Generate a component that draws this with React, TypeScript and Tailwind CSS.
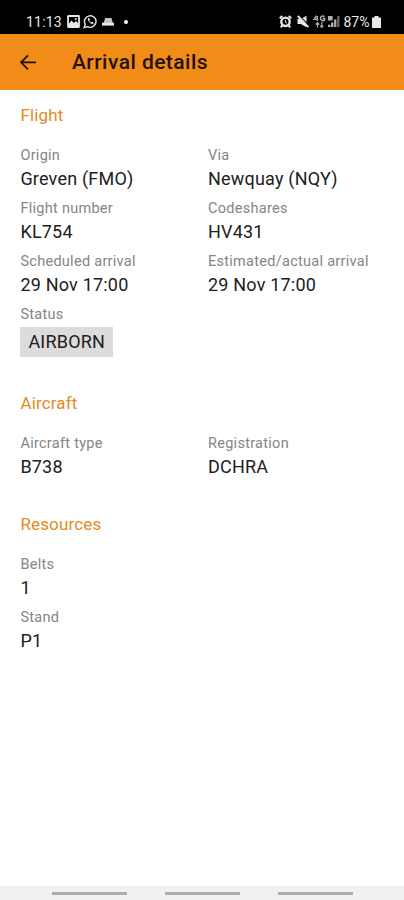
import { type ReactNode } from "react";

type FieldData = { label: string; value: string; chip?: boolean };

const sections: { title: string; fields: FieldData[]; spacing: string; single?: boolean }[] = [
  {
    title: "Flight",
    spacing: "mb-[34px]",
    fields: [
      { label: "Origin", value: "Greven (FMO)" },
      { label: "Via", value: "Newquay (NQY)" },
      { label: "Flight number", value: "KL754" },
      { label: "Codeshares", value: "HV431" },
      { label: "Scheduled arrival", value: "29 Nov 17:00" },
      { label: "Estimated/actual arrival", value: "29 Nov 17:00" },
      { label: "Status", value: "AIRBORN", chip: true },
    ],
  },
  {
    title: "Aircraft",
    spacing: "mb-[31px]",
    fields: [
      { label: "Aircraft type", value: "B738" },
      { label: "Registration", value: "DCHRA" },
    ],
  },
  {
    title: "Resources",
    spacing: "mb-0",
    single: true,
    fields: [
      { label: "Belts", value: "1" },
      { label: "Stand", value: "P1" },
    ],
  },
];

function StatusBar() {
  return (
    <div className="flex h-[34px] items-center justify-between bg-black pt-[9px] pr-[23.5px] pl-[26px] text-[#e8e8e8]">
      <div className="flex items-center">
        <span className="w-[41px] text-[14px] leading-[16px] tracking-[0.2px]">11:13</span>
        {/* gallery */}
        <svg width="13" height="13" viewBox="0 0 13 13" fill="none">
          <rect x="1" y="1" width="11" height="11" rx="0.4" stroke="currentColor" strokeWidth="1.8" />
          <path d="M1.5 9 4.5 5.5 6.8 8 9 6l2.5 2.5v3h-10z" fill="currentColor" />
          <circle cx="8.8" cy="3.9" r="1" fill="currentColor" />
        </svg>
        {/* whatsapp */}
        <svg className="ml-[3px]" width="15" height="15" viewBox="0 0 15 15" fill="none">
          <path d="M1.2 13.6 2.2 10.4A5.8 5.8 0 1 1 4.6 12.7Z" stroke="currentColor" strokeWidth="1.4" />
          <path d="M5.4 4.1c-1 .8-.7 2.2.8 3.9s3.2 2.7 4.3 1.5l.2-.8-1.6-1-.9.8c-.9-.3-1.8-1.3-2-2.1l.7-.8-.7-1.5Z" fill="currentColor" />
        </svg>
        {/* drive */}
        <svg className="ml-1" width="12" height="8" viewBox="0 0 12 8" fill="currentColor">
          <path d="M3.2 0h6.3l1.3 5H1.6z" opacity="0.85" />
          <path d="M0 4.8h12v2.8H0z" />
        </svg>
        <span className="ml-[10px] size-1 rounded-full bg-white" />
      </div>
      <div className="flex items-center">
        {/* alarm */}
        <svg width="13" height="13" viewBox="0 0 13 13" fill="none" stroke="currentColor">
          <circle cx="6.5" cy="6.8" r="4.2" strokeWidth="2.4" />
          <path d="M.7 3.3 3.3 1M12.3 3.3 9.7 1M3.3 10.5l-1.6 1.8M9.7 10.5l1.6 1.8" strokeWidth="2" />
          <path d="M6.5 4.8v2.6l1.6.7" strokeWidth="0.9" />
        </svg>
        {/* muted */}
        <svg className="ml-[5px]" width="12" height="13" viewBox="0 0 12 13">
          <path d="M.5 4h3L9.5.8v11.4L3.8 9H.5z" fill="currentColor" />
          <path d="M2.2.6 12 10.6" stroke="#000" strokeWidth="1.1" />
          <path d="M.9 1 11.4 12.2" stroke="currentColor" strokeWidth="1.9" />
        </svg>
        {/* 4G data */}
        <svg className="ml-[4px]" width="13" height="13" viewBox="0 0 13 13" fill="none" stroke="currentColor" opacity="0.75">
          <path d="M3.7.6 1 4.4h4.2M4.2 1v5M11.5 1.6C10 .3 7.4 1 7.4 3.3s2.7 3 4.3 1.8V3.5H9.5" strokeWidth="1.4" />
          <path d="M4.5 12.5V8M2.8 9.5 4.5 7.7l1.7 1.8M8.8 7v5M7.1 10.7l1.7 1.7 1.7-1.7" strokeWidth="1.2" />
        </svg>
        {/* signal */}
        <svg className="ml-[2px]" width="12" height="13" viewBox="0 0 12 13" fill="currentColor">
          <path d="M0 1h4.6v4.5H0z" opacity="0.75" />
          <path d="M0 9.8h2.4V12H0zM3 7.5h2.4V12H3zM6.1 4.5h2.3V12H6.1z" opacity="0.75" />
          <path d="M9.2 1h2.3v11H9.2z" opacity="0.45" />
        </svg>
        <span className="ml-1 w-[28px] text-[14px] leading-[16px]">87%</span>
        {/* battery */}
        <svg width="9" height="12" viewBox="0 0 9 12" fill="currentColor">
          <path d="M2.5 0h4v1.5H9V12H0V1.5h2.5z" />
        </svg>
      </div>
    </div>
  );
}

function AppBar() {
  return (
    <header className="flex h-14 items-center bg-[#f28c18] pl-5 text-[#1d1205]">
      <svg width="17" height="16" viewBox="0 0 17 16" fill="none" stroke="currentColor" strokeWidth="1.8">
        <path d="M16 8.3H1.6M8 1.3l-7 7 7 7" />
      </svg>
      <h1 className="ml-[35px] text-[21px] leading-6 font-medium tracking-[0.45px]">Arrival details</h1>
    </header>
  );
}

function Field({ label, value, chip }: FieldData) {
  return (
    <div>
      <div className="h-5 pt-px text-[14.5px] leading-5 tracking-[0.28px] text-[#858585]">{label}</div>
      {chip ? (
        <div className="mt-[3px] w-fit bg-[#dcdcdc] px-2 text-[18px] leading-[30px] tracking-[0.2px] text-[#202020]">{value}</div>
      ) : (
        <div className="text-[18px] leading-7 tracking-[0.2px] text-[#202020]">{value}</div>
      )}
    </div>
  );
}

function Section({ title, children, single, spacing }: { title: string; children: ReactNode; single?: boolean; spacing: string }) {
  return (
    <section className={spacing}>
      <h2 className="mb-[18px] text-[17px] leading-6 tracking-[0.15px] text-[#e58a1f]">{title}</h2>
      <div className={single ? "grid gap-y-[5px]" : "grid grid-cols-[187.6px_1fr] gap-y-[5px]"}>{children}</div>
    </section>
  );
}

export default function App() {
  return (
    <div className="flex h-[900px] w-[404px] flex-col bg-white font-[Roboto,sans-serif]">
      <StatusBar />
      <AppBar />
      <main className="flex-1 pt-[13px] pl-[20.4px]">
        {sections.map((section) => (
          <Section key={section.title} title={section.title} single={section.single} spacing={section.spacing}>
            {section.fields.map((field) => (
              <Field key={field.label} {...field} />
            ))}
          </Section>
        ))}
      </main>
      <div className="flex h-[14px] justify-center gap-[38px] bg-[#f1f1f1] pt-[6px]">
        <span className="h-[3px] w-[75px] bg-[#adadad]" />
        <span className="h-[3px] w-[75px] bg-[#adadad]" />
        <span className="h-[3px] w-[75px] bg-[#adadad]" />
      </div>
    </div>
  );
}
